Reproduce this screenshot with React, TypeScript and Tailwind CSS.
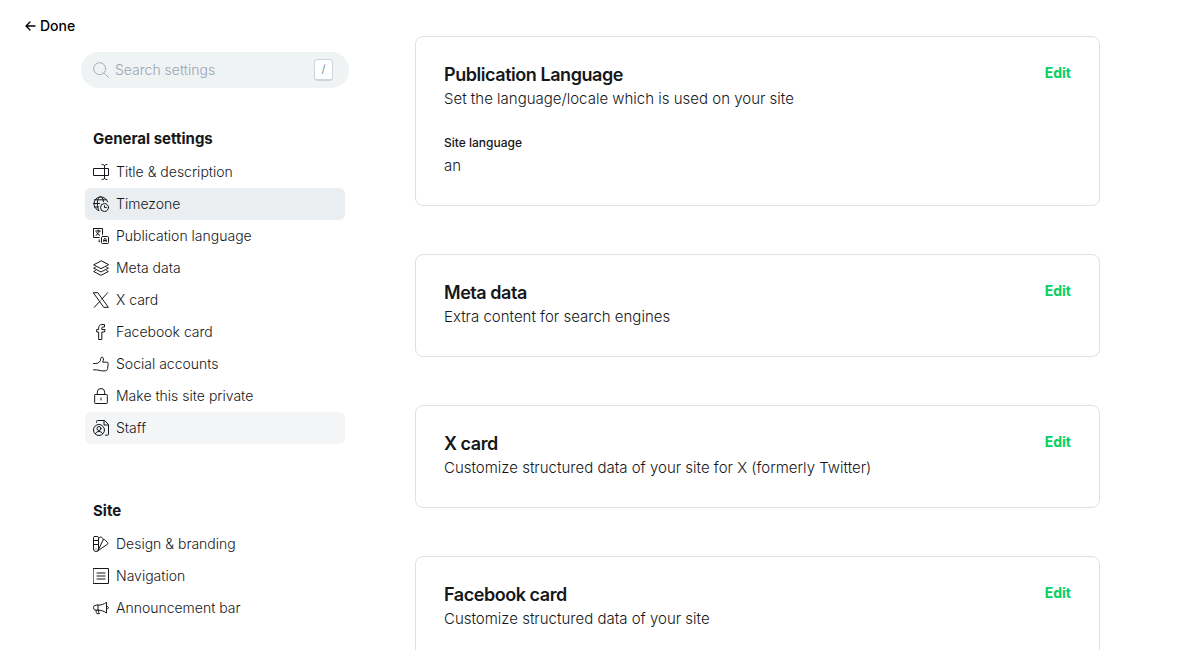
import type { ReactNode } from "react";

function Icon({ children }: { children: ReactNode }) {
  return (
    <svg
      viewBox="0 0 24 24"
      className="size-4 shrink-0"
      fill="none"
      stroke="currentColor"
      strokeWidth="1.5"
      strokeLinecap="round"
      strokeLinejoin="round"
      aria-hidden="true"
    >
      {children}
    </svg>
  );
}

const icons = {
  title: (
    <Icon>
      <path d="M17.250 17.250H.75V6.750h22.500v10.500h-6M17.250 3v18M13.500.75c2.250 0 3.750.75 3.750 2.250 0-1.500 1.500-2.250 3.750-2.250M13.500 23.250c2.250 0 3.750-.75 3.750-2.250 0 1.500 1.500 2.250 3.750 2.250" />
    </Icon>
  ),
  timezone: (
    <Icon>
      <circle cx="17.250" cy="17.250" r="6" />
      <path d="M19.900 17.250h-2.650V14.600M8.700 21.900A10.500 10.500 0 1 1 21.900 8.700M8.700 21.900C7.400 19.500 6.600 15.700 6.600 11.250c0-5.800 2.080-10.500 4.650-10.500 2.200 0 4 3.300 4.500 7.700M.75 11.250h9M2.300 5.700h18M2.200 16.500h6" />
    </Icon>
  ),
  language: (
    <Icon>
      <path d="M.75.75h13.500v9M.75.75v13.500h8.500M4 4.500h7M7.500 3v1.500M9.500 4.500C9 7.500 7 9.800 4.500 11M5.500 6.500c.8 2 2.300 3.500 4.500 4.500M9.250 18v2.500h1" />
      <rect x="12.750" y="12.750" width="10.500" height="10.500" rx="1.500" />
      <path d="M16.250 20.500v-3a1.750 1.750 0 0 1 3.500 0v3M16.250 18.750h3.500" />
    </Icon>
  ),
  metadata: (
    <Icon>
      <path d="M12 1.500 1 7.250 12 13l11-5.750zM3.500 11 1 12.250 12 18l11-5.750L20.500 11M3.500 16 1 17.250 12 23l11-5.750L20.500 16" />
    </Icon>
  ),
  x: (
    <Icon>
      <path d="M1 1h6.200L23 23h-6.200zM22 1l-8.800 9.700M10.700 13.400 2 23" />
    </Icon>
  ),
  facebook: (
    <Icon>
      <path d="M17.500 8.250h-4.250V6c0-1 .5-1.500 1.500-1.500h2.500V.75H13.500c-3 0-5 1.900-5 5v2.500H5.500V12h3v11.250h4.750V12h3.400z" />
    </Icon>
  ),
  social: (
    <Icon>
      <path d="M.75 11.250h3.500c4 0 7.500-3 7.500-7.500 0-1.300.8-2 1.900-2s2.100.9 2.100 2.500c0 1.800-.6 3.500-1.300 5h6.300a2 2 0 0 1 2 2.200l-.8 7.500c-.3 2-1.500 3.300-3.500 3.300H13c-3.200 0-4.500-1.500-7.500-1.500H.75" />
    </Icon>
  ),
  lock: (
    <Icon>
      <rect x="2.500" y="9.750" width="19" height="13.500" rx="1" />
      <path d="M6.500 9.750V6.250a5.500 5.500 0 0 1 11 0v3.500M12 15v3" />
    </Icon>
  ),
  staff: (
    <Icon>
      <circle cx="9" cy="15" r="8.250" />
      <circle cx="9" cy="12.750" r="3" />
      <path d="M3.600 20.500c1.200-2.200 3-3.250 5.400-3.250s4.200 1.050 5.400 3.250M5.250 3.500V2.250a1.500 1.500 0 0 1 1.500-1.500h10.500l6 6v14.500a1.500 1.500 0 0 1-1.500 1.500h-3M16.500.75v6.750h6.750" />
    </Icon>
  ),
  design: (
    <Icon>
      <path d="M2.250.75h4.500a1.500 1.500 0 0 1 1.500 1.500V19.500a3.750 3.750 0 0 1-7.500 0V2.250a1.500 1.500 0 0 1 1.500-1.500zM.75 6.750h7.500M.75 12.750h7.500M4.500 19.400v.2M8.250 3.700l3.200-2.200a1.200 1.200 0 0 1 1.500.3l2 2.300a1.500 1.500 0 0 1 .3 1.500L7.800 21.500M15.300 5.600l1.300-.3a1.500 1.500 0 0 1 1.400.5l4 4.400a1.500 1.500 0 0 1-.1 2L6.800 22.500" />
    </Icon>
  ),
  navigation: (
    <Icon>
      <rect x=".75" y=".75" width="22.500" height="22.500" />
      <path d="M6 7.500h12M6 12h12M6 16.500h12" />
    </Icon>
  ),
  announcement: (
    <Icon>
      <path d="M7.500 7.750v7.500H4.250a3.500 3.500 0 0 1-3.500-3.500v-.5a3.500 3.500 0 0 1 3.500-3.500zM7.500 7.750c4.700 0 9-1.400 12.750-4.250v16c-3.750-2.850-8.050-4.250-12.750-4.250M4.500 15.250c0 2.400.6 4.200 1.500 5.250h3.500c-.9-1.100-1.300-3-1.300-5.250M20.250 9.750c2 0 3 .6 3 1.750s-1 1.750-3 1.750" />
    </Icon>
  ),
};

type NavItem = { label: string; icon: ReactNode; state?: "current" | "hover" };

const groups: { title: string; items: NavItem[] }[] = [
  {
    title: "General settings",
    items: [
      { label: "Title & description", icon: icons.title },
      { label: "Timezone", icon: icons.timezone, state: "current" },
      { label: "Publication language", icon: icons.language },
      { label: "Meta data", icon: icons.metadata },
      { label: "X card", icon: icons.x },
      { label: "Facebook card", icon: icons.facebook },
      { label: "Social accounts", icon: icons.social },
      { label: "Make this site private", icon: icons.lock },
      { label: "Staff", icon: icons.staff, state: "hover" },
    ],
  },
  {
    title: "Site",
    items: [
      { label: "Design & branding", icon: icons.design },
      { label: "Navigation", icon: icons.navigation },
      { label: "Announcement bar", icon: icons.announcement },
    ],
  },
];

function itemBackground(state?: "current" | "hover") {
  if (state === "current") return "bg-[#ebeef0]";
  if (state === "hover") return "bg-[#f4f5f6]";
  return "";
}

function SettingCard({
  title,
  description,
  children,
}: {
  title: string;
  description: string;
  children?: ReactNode;
}) {
  return (
    <section className="shrink-0 rounded-lg border border-[#dde1e5] p-7">
      <div className="flex items-start justify-between gap-4">
        <div>
          <h2 className="text-lg leading-5 font-semibold tracking-tight">{title}</h2>
          <p className="mt-0.5 text-[15px] leading-[23px] font-light">{description}</p>
        </div>
        <button type="button" className="text-sm leading-4 font-bold text-[#06cf5c]">
          Edit
        </button>
      </div>
      {children}
    </section>
  );
}

export default function App() {
  return (
    <div className="flex h-screen overflow-hidden bg-white font-['Inter',sans-serif] text-[#15171a]">
      <aside className="w-[349px] shrink-0 pt-4">
        <a href="#done" className="ml-6 flex h-5 w-fit items-center gap-1 text-sm font-medium text-black">
          <svg
            viewBox="0 0 12 12"
            className="size-3"
            fill="none"
            stroke="currentColor"
            strokeWidth="1.3"
            strokeLinecap="round"
            strokeLinejoin="round"
            aria-hidden="true"
          >
            <path d="M11 6H2.500M6 2 2 6l4 4" />
          </svg>
          Done
        </a>
        <div className="mt-4 ml-[81px]">
          <label className="flex h-9 items-center rounded-full bg-[#eff3f4] pr-4 pl-3">
            <svg
              viewBox="0 0 24 24"
              className="size-4 shrink-0 text-[#a3afb9]"
              fill="none"
              stroke="currentColor"
              strokeWidth="1.5"
              strokeLinecap="round"
              aria-hidden="true"
            >
              <circle cx="10" cy="10" r="9" />
              <path d="m16.500 16.500 7 7" />
            </svg>
            <input
              type="text"
              aria-label="Search settings"
              placeholder="Search settings"
              className="ml-1.5 min-w-0 flex-1 bg-transparent text-sm font-light outline-none placeholder:text-[#9aa5b1]"
            />
            <kbd className="flex h-[22px] w-[19px] items-center justify-center rounded border border-b-2 border-[#ced4d9] bg-white font-['Inter',sans-serif] text-[11px] text-[#7c8b9a]">
              /
            </kbd>
          </label>
          <nav className="mt-10 flex flex-col gap-14 px-1">
            {groups.map((group) => (
              <div key={group.title}>
                <h2 className="mb-[7px] px-2 text-[15px] leading-[21px] font-bold">{group.title}</h2>
                <ul>
                  {group.items.map((item) => (
                    <li key={item.label}>
                      <a
                        href="#settings"
                        className={`flex h-8 items-center gap-[7px] rounded-md px-2 text-sm font-light ${itemBackground(item.state)}`}
                      >
                        {item.icon}
                        {item.label}
                      </a>
                    </li>
                  ))}
                </ul>
              </div>
            ))}
          </nav>
        </div>
      </aside>
      <main className="mr-[84px] ml-[66px] flex min-w-0 flex-1 flex-col gap-12 pt-9">
        <SettingCard
          title="Publication Language"
          description="Set the language/locale which is used on your site"
        >
          <dl className="mt-6">
            <dt className="text-xs leading-[18px] font-medium">Site language</dt>
            <dd className="mt-0.5 text-[15px] leading-[23px] font-light">an</dd>
          </dl>
        </SettingCard>
        <SettingCard title="Meta data" description="Extra content for search engines" />
        <SettingCard
          title="X card"
          description="Customize structured data of your site for X (formerly Twitter)"
        />
        <SettingCard title="Facebook card" description="Customize structured data of your site" />
      </main>
    </div>
  );
}
